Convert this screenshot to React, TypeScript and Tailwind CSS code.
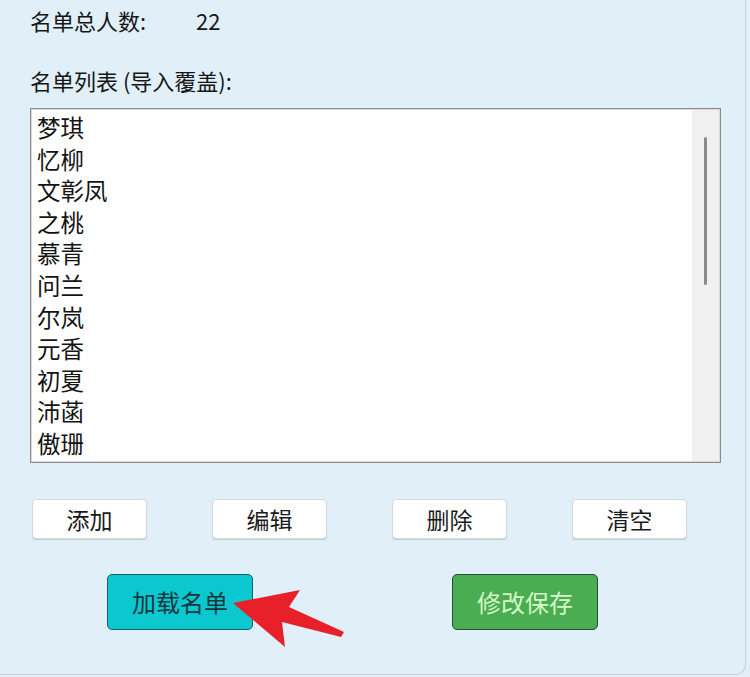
import React from "react";

const names = ["梦琪", "忆柳", "文彰凤", "之桃", "慕青", "问兰", "尔岚", "元香", "初夏", "沛菡", "傲珊"];

export default function App() {
  const font = { fontFamily: '"Noto Sans CJK SC", "Noto Sans", sans-serif' };
  return (
    <div className="w-[750px] h-[677px] bg-[#e3eff8] overflow-hidden" style={font}>
      <div className="relative w-[746px] h-[675px] bg-[#e1eff9] border-r border-b border-[#c3d0da] rounded-br-[10px] text-[#161616]">
        <div className="pl-[30px] flex flex-col">
          <div className="h-10 flex items-center text-[22px]">
            <span className="w-[166px]">名单总人数:</span>
            <span>22</span>
          </div>
          <div className="mt-5 h-10 flex items-center text-[22px]">名单列表 (导入覆盖):</div>
          <div className="mt-2 w-[691px] h-[355px] border border-[#8c8c8c] p-px bg-[#dadada]">
            <div className="w-full h-full bg-white flex">
              <div className="flex-1 pl-[5px] pt-[2px] text-[23.5px] leading-[31.6px] text-[#141414] overflow-hidden">
                {names.map((n) => (
                  <div key={n}>{n}</div>
                ))}
              </div>
              <div className="w-[27px] h-full bg-[#f0f0f0] flex justify-center pt-[27px]">
                <div className="w-[3px] h-[148px] bg-[#8a8a8a] rounded-full" />
              </div>
            </div>
          </div>
          <div className="mt-9 pl-[2px] flex gap-[65px]">
            {["添加", "编辑", "删除", "清空"].map((t) => (
              <div
                key={t}
                className="w-[115px] h-10 bg-white rounded-[4px] border border-[#d4dae0] shadow-[0_1px_1px_rgba(0,0,0,0.15)] flex items-center justify-center text-[23px] text-[#1a1a1a]"
              >
                {t}
              </div>
            ))}
          </div>
          <div className="mt-[35px] pl-[77px] flex gap-[199px]">
            <div className="w-[146px] h-[56px] bg-[#0bc8cf] border border-[#1d5f6e] rounded-[5px] flex items-center justify-center text-[24px] text-[#17363d]">
              加载名单
            </div>
            <div className="w-[146px] h-[56px] bg-[#4aad52] border border-[#22503a] rounded-[5px] flex items-center justify-center text-[24px] text-[#d6f7c8]">
              修改保存
            </div>
          </div>
        </div>
        <svg className="absolute left-0 top-0 pointer-events-none" width="750" height="677">
          <polygon
            points="233,603 300,590 289,607 344,632 341,637 282,622 285,647"
            fill="#e8202a"
          />
        </svg>
      </div>
    </div>
  );
}
